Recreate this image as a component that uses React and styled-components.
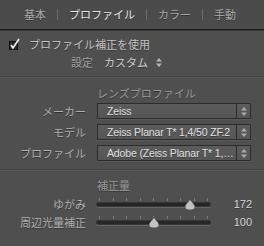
import styled, { createGlobalStyle } from "styled-components";

const Global = createGlobalStyle`
  html, body {
    margin: 0;
    padding: 0;
    background: #4f4f4f;
  }
  body {
    font-family: "Liberation Sans", "Noto Sans CJK JP", sans-serif;
    font-size: 11px;
  }
`;

const Panel = styled.div`
  width: 264px;
  height: 246px;
  background: #4f4f4f;
  overflow: hidden;
  color: #b8b8b8;
  text-shadow: 0 1px 0 rgba(0, 0, 0, 0.35);
`;

const TabBar = styled.div`
  height: 29px;
  display: flex;
  align-items: center;
  justify-content: center;
  gap: 11px;
  background: #4b4b4b;
  padding-right: 4px;
`;

const Tab = styled.span`
  font-size: 11px;
  line-height: 14px;
  color: ${(p) => (p.$active ? "#e6e6e6" : "#a9a9a9")};
`;

const TabSep = styled.span`
  width: 1px;
  height: 11px;
  background: #6a6a6a;
`;

const TabRule = styled.div`
  height: 1px;
  background: #1c1c1c;
  border-bottom: 1px solid #3a3a3a;
`;

const CheckRow = styled.div`
  height: 16px;
  margin-top: 5px;
  padding-left: 9px;
  display: flex;
  align-items: center;
  gap: 8px;
  color: #c4c4c4;
`;

const SettingRow = styled.div`
  height: 16px;
  margin-top: 2px;
  padding-left: 71px;
  display: flex;
  align-items: center;
  gap: 11px;
`;

const Muted = styled.span`
  color: #a0a0a0;
`;

const Value = styled.span`
  display: flex;
  align-items: center;
  gap: 8px;
  color: #d0d0d0;
`;

const Rule = styled.div`
  margin-top: ${(p) => p.$top}px;
  height: 0;
  border-top: 1px solid #444444;
  border-bottom: 1px solid #575757;
`;

const Header = styled.div`
  height: 16px;
  margin-top: ${(p) => p.$top}px;
  padding-left: 97px;
  display: flex;
  align-items: center;
  color: #9a9a9a;
`;

const Rows = styled.div`
  display: flex;
  flex-direction: column;
  gap: ${(p) => p.$gap}px;
  margin-top: 2px;
`;

const Row = styled.div`
  height: ${(p) => p.$h}px;
  display: grid;
  grid-template-columns: 86px minmax(0, 1fr);
  column-gap: 11px;
  align-items: center;
  padding-right: 13px;
`;

const Label = styled.span`
  text-align: right;
  color: #b0b0b0;
  white-space: nowrap;
`;

const Select = styled.div`
  min-width: 0;
  height: 14px;
  display: flex;
  border: 1px solid #2c2c2c;
  background: linear-gradient(#5c5c5c, #555555);
  box-shadow: 0 1px 0 #5a5a5a;
`;

const SelectText = styled.span`
  flex: 1;
  min-width: 0;
  padding-left: 9px;
  padding-right: 1px;
  line-height: 14px;
  color: #e2e2e2;
  white-space: nowrap;
  overflow: hidden;
  text-overflow: ellipsis;
  font-size: 10.5px;
  letter-spacing: -0.15px;
`;

const Stepper = styled.span`
  flex: none;
  width: 13px;
  border-left: 1px solid #2c2c2c;
  display: flex;
  align-items: center;
  justify-content: center;
`;

const SliderRow = styled.div`
  height: 18px;
  display: grid;
  grid-template-columns: 86px 115px 1fr;
  column-gap: 10px;
  align-items: center;
  padding-right: 12px;
`;

const Track = styled.div`
  position: relative;
  height: 18px;
  display: flex;
  align-items: center;
`;

const Ticks = styled.div`
  position: absolute;
  left: 3px;
  right: 3px;
  top: 3px;
  display: flex;
  justify-content: space-between;
`;

const Tick = styled.span`
  width: 1px;
  height: 3px;
  background: #7a7a7a;
`;

const Groove = styled.div`
  width: 100%;
  height: 3px;
  margin-top: 1px;
  border-radius: 2px;
  background: #262626;
  border: 1px solid #383838;
  box-shadow: 0 1px 0 #666666;
`;

const Thumb = styled.svg`
  position: absolute;
  top: 4px;
  margin-left: -5px;
`;

const Num = styled.span`
  text-align: right;
  color: #d6d6d6;
`;

function Arrows({ color = "#b8b8b8" }) {
  return (
    <svg width="6" height="9" viewBox="0 0 6 9">
      <path d="M3 0 L6 3.5 L0 3.5 Z" fill={color} />
      <path d="M3 9 L6 5.5 L0 5.5 Z" fill={color} />
    </svg>
  );
}

function CheckBox() {
  return (
    <svg width="12" height="12" viewBox="0 0 12 12" style={{ marginTop: -1 }}>
      <rect x="0.5" y="3.5" width="8" height="8" fill="#2a2a2a" stroke="#111" />
      <path d="M2 7 L4 10 L10 1" fill="none" stroke="#f2f2f2" strokeWidth="1.6" />
    </svg>
  );
}

const lens = [
  ["メーカー", "Zeiss"],
  ["モデル", "Zeiss Planar T* 1,4/50 ZF.2"],
  ["プロファイル", "Adobe (Zeiss Planar T* 1,4/50 ZF.2)"],
];

const sliders = [
  ["ゆがみ", 172, 0.82],
  ["周辺光量補正", 100, 0.5],
];

export default function App() {
  return (
    <Panel>
      <Global />
      <TabBar>
        <Tab>基本</Tab>
        <TabSep />
        <Tab $active>プロファイル</Tab>
        <TabSep />
        <Tab>カラー</Tab>
        <TabSep />
        <Tab>手動</Tab>
      </TabBar>
      <TabRule />

      <CheckRow>
        <CheckBox />
        <span>プロファイル補正を使用</span>
      </CheckRow>
      <SettingRow>
        <Muted>設定</Muted>
        <Value>
          カスタム
          <Arrows />
        </Value>
      </SettingRow>

      <Rule $top={6} />
      <Header $top={7}>レンズプロファイル</Header>
      <Rows $gap={5}>
        {lens.map(([label, value]) => (
          <Row key={label} $h={16}>
            <Label>{label}</Label>
            <Select>
              <SelectText>{value}</SelectText>
              <Stepper>
                <Arrows color="#aaaaaa" />
              </Stepper>
            </Select>
          </Row>
        ))}
      </Rows>

      <Rule $top={8} />
      <Header $top={6}>補正量</Header>
      <Rows $gap={0}>
        {sliders.map(([label, value, pos]) => (
          <SliderRow key={label}>
            <Label>{label}</Label>
            <Track>
              <Ticks>
                {Array.from({ length: 9 }).map((_, i) => (
                  <Tick key={i} />
                ))}
              </Ticks>
              <Groove />
              <Thumb
                width="10"
                height="11"
                viewBox="0 0 10 11"
                style={{ left: `${pos * 100}%` }}
              >
                <path
                  d="M5 0 C6 3 10 5 10 8 C10 10 8 11 5 11 C2 11 0 10 0 8 C0 5 4 3 5 0 Z"
                  fill="#c2c2c2"
                  stroke="#3a3a3a"
                  strokeWidth="0.6"
                />
              </Thumb>
            </Track>
            <Num>{value}</Num>
          </SliderRow>
        ))}
      </Rows>
    </Panel>
  );
}
